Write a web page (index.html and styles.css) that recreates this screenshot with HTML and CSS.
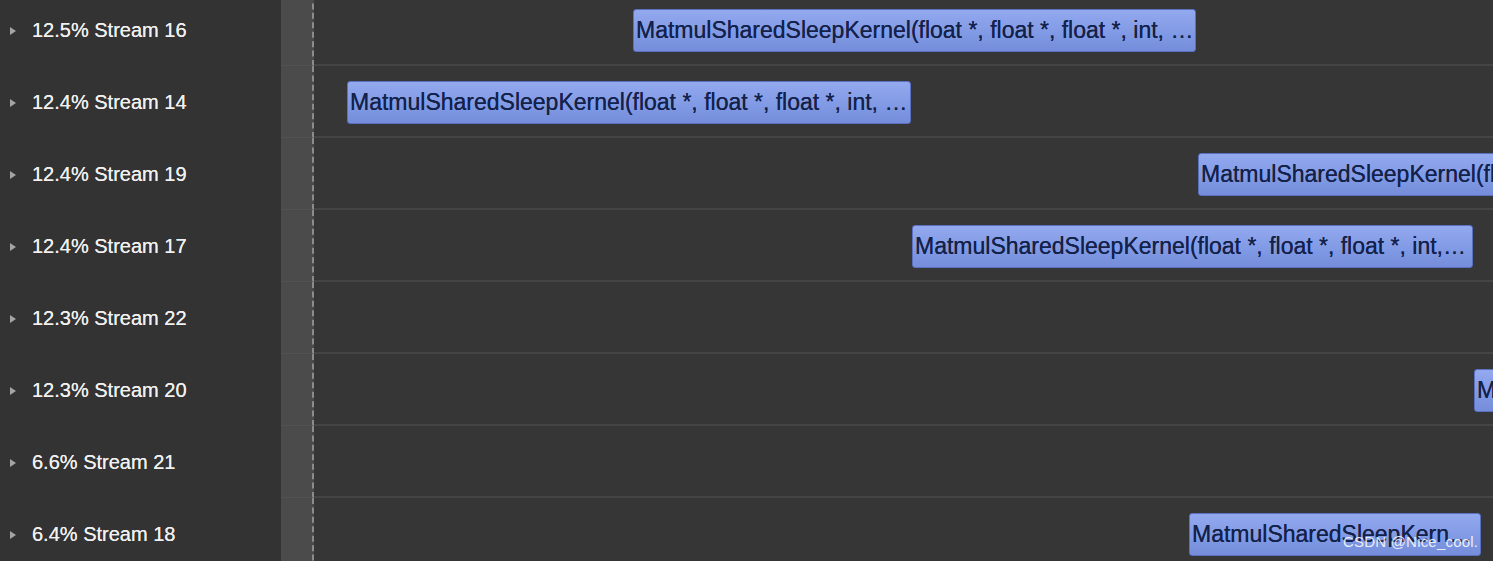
FILE: index.html
```html
<!DOCTYPE html>
<html>
<head>
<meta charset="utf-8">
<link rel="stylesheet" href="styles.css">
</head>
<body>
<div class="view">
  <div class="rows">
    <div class="row">
      <div class="label"><span class="caret"></span><span class="name">12.5% Stream 16</span></div>
      <div class="gutter"></div>
      <div class="track"><div class="bar" style="left:319px;width:563px">MatmulSharedSleepKernel(float *, float *, float *, int, …</div></div>
    </div>
    <div class="row">
      <div class="label"><span class="caret"></span><span class="name">12.4% Stream 14</span></div>
      <div class="gutter"></div>
      <div class="track"><div class="bar" style="left:33px;width:564px">MatmulSharedSleepKernel(float *, float *, float *, int, …</div></div>
    </div>
    <div class="row">
      <div class="label"><span class="caret"></span><span class="name">12.4% Stream 19</span></div>
      <div class="gutter"></div>
      <div class="track"><div class="bar" style="left:884px;width:600px">MatmulSharedSleepKernel(float *, float *, float *, int, …</div></div>
    </div>
    <div class="row">
      <div class="label"><span class="caret"></span><span class="name">12.4% Stream 17</span></div>
      <div class="gutter"></div>
      <div class="track"><div class="bar" style="left:598px;width:561px">MatmulSharedSleepKernel(float *, float *, float *, int,…</div></div>
    </div>
    <div class="row">
      <div class="label"><span class="caret"></span><span class="name">12.3% Stream 22</span></div>
      <div class="gutter"></div>
      <div class="track"></div>
    </div>
    <div class="row">
      <div class="label"><span class="caret"></span><span class="name">12.3% Stream 20</span></div>
      <div class="gutter"></div>
      <div class="track"><div class="bar" style="left:1160px;width:560px">MatmulSharedSleepKernel(float *, float *, float *, int, …</div></div>
    </div>
    <div class="row">
      <div class="label"><span class="caret"></span><span class="name">6.6% Stream 21</span></div>
      <div class="gutter"></div>
      <div class="track"></div>
    </div>
    <div class="row">
      <div class="label"><span class="caret"></span><span class="name">6.4% Stream 18</span></div>
      <div class="gutter"></div>
      <div class="track"><div class="bar" style="left:875px;width:292px">MatmulSharedSleepKern…</div></div>
    </div>
  </div>
  <div class="watermark">CSDN @Nice_cool.</div>
</div>
</body>
</html>
```

FILE: styles.css
```css
html, body {
  margin: 0;
  padding: 0;
  background: #363636;
  overflow: hidden;
}
.view {
  position: relative;
  width: 1493px;
  height: 561px;
  overflow: hidden;
  font-family: "Liberation Sans", Arial, Helvetica, sans-serif;
}
.rows {
  display: flex;
  flex-direction: column;
  margin-top: -6px;
}
.row {
  display: flex;
  height: 72px;
}
.label {
  width: 281px;
  flex: none;
  background: #333333;
  display: flex;
  align-items: center;
  box-sizing: border-box;
  padding-left: 10px;
}
.caret {
  width: 0;
  height: 0;
  border-top: 4px solid transparent;
  border-bottom: 4px solid transparent;
  border-left: 6px solid #a4a4a4;
  margin-right: 16px;
  margin-top: 1px;
}
.name {
  color: #f0f0f0;
  font-size: 20px;
  text-shadow: 0 0 0.4px #f0f0f0;
}
.gutter {
  width: 31px;
  flex: none;
  background: #4b4b4b;
  border-right: 2px dashed #8c8c8c;
  box-sizing: content-box;
  border-bottom: 1px solid #525252;
  height: 71px;
}
.track {
  flex: 1;
  position: relative;
  border-bottom: 2px solid #444444;
  box-sizing: border-box;
  height: 72px;
}
.bar {
  position: absolute;
  top: 15px;
  height: 43px;
  box-sizing: border-box;
  border: 1px solid #5a70c0;
  border-radius: 3px;
  background: linear-gradient(#93a9ef, #8099e4 60%, #758dda);
  color: #14224a;
  font-size: 23px;
  letter-spacing: 0;
  line-height: 41px;
  padding-left: 2px;
  white-space: nowrap;
  overflow: hidden;
  text-shadow: 0 0 0.4px #14224a;
}
.watermark {
  position: absolute;
  left: 1343px;
  top: 533px;
  color: rgba(255, 255, 255, 0.85);
  font-size: 15px;
  letter-spacing: 0.2px;
}
```
